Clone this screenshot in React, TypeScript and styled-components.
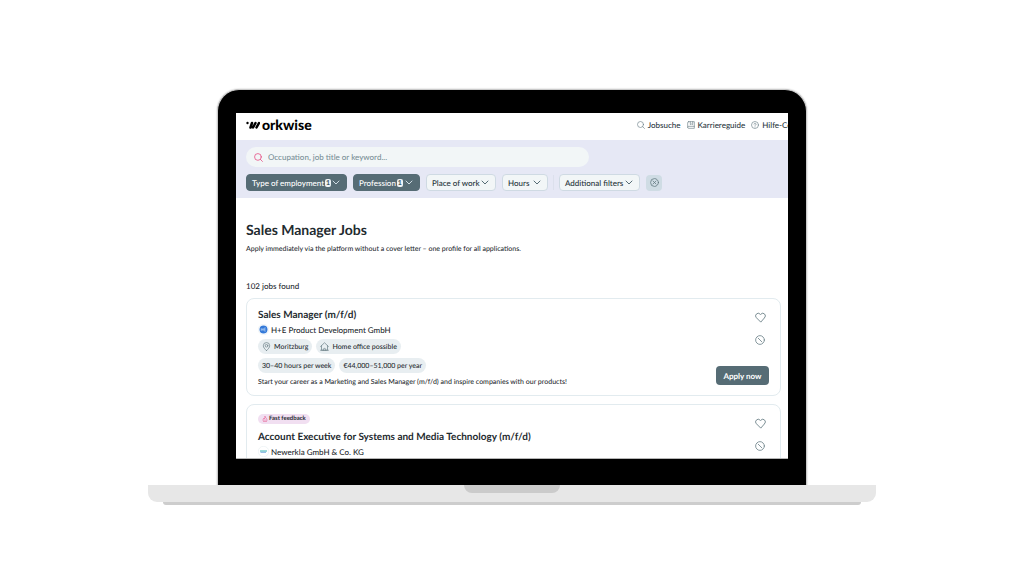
import React from "react";
import styled, { createGlobalStyle, css } from "styled-components";

const Global = createGlobalStyle`
  *, *::before, *::after { box-sizing: border-box; }
  body {
    margin: 0;
    background: #fff;
    color: #1f2b30;
    font-family: Lato, "Liberation Sans", sans-serif;
    font-size: 8px;
    line-height: 10px;
    font-weight: 500;
    text-rendering: geometricPrecision;
  }
  button, input { font: inherit; color: inherit; margin: 0; text-rendering: inherit; }
  h1, h2, p, ul { margin: 0; padding: 0; }
  a { color: inherit; text-decoration: none; }
`;

const Stage = styled.div`
  padding: 89px 148px 0;
`;

const Lid = styled.div`
  margin: 0 69px;
  padding: 23px 18px 26px;
  background: #000;
  border: 1px solid #c9c9c9;
  border-bottom: 0;
  border-radius: 22px 22px 0 0;
  box-shadow: 0 0 1px 1px #ececec;
`;

const Screen = styled.div`
  aspect-ratio: 552 / 346;
  overflow: hidden;
  background: #fff;
  border-bottom: 1px solid #b5b5b5;
`;

const Base = styled.div`
  height: 17px;
  background: #e7e7e7;
  border-radius: 0 0 9px 9px;
  display: flex;
  justify-content: center;
`;

const Notch = styled.div`
  width: 96px;
  height: 8px;
  background: #cbcbcb;
  border-radius: 0 0 9px 9px;
`;

const Foot = styled.div`
  margin: 0 15px;
  height: 3px;
  background: #cdcdcd;
  border-radius: 0 0 3px 3px;
`;

const Header = styled.header`
  display: flex;
  align-items: center;
  justify-content: space-between;
  height: 27px;
  padding: 0 0 3px 10px;
`;

const Logo = styled.a`
  display: flex;
  align-items: center;
  gap: 2px;
  color: #000;
  font-size: 14px;
  line-height: 16px;
  font-weight: 900;
`;

const Nav = styled.nav`
  display: flex;
  flex: none;
  gap: 6px;
  margin-right: -18px;
`;

const NavLink = styled.a`
  display: flex;
  align-items: center;
  gap: 3px;
  color: #2b393f;
  white-space: nowrap;
  svg { color: #70848b; }
`;

const SearchBand = styled.form`
  height: 58px;
  padding: 7px 10px;
  background: #e6e8f5;
`;

const SearchBox = styled.label`
  display: flex;
  align-items: center;
  gap: 5px;
  width: 343px;
  max-width: 100%;
  height: 20px;
  padding: 0 8px;
  border-radius: 10px;
  background: #f2f6f7;
  color: #e5447e;
`;

const SearchInput = styled.input`
  flex: 1;
  min-width: 0;
  padding: 0;
  border: 0;
  outline: 0;
  background: transparent;
  color: #37474d;
  &::placeholder { color: #7b9098; opacity: 1; }
`;

const Filters = styled.div`
  display: flex;
  align-items: center;
  gap: 6px;
  margin-top: 7px;
`;

const FilterButton = styled.button<{ $active?: boolean; $width: number }>`
  display: flex;
  align-items: center;
  justify-content: space-between;
  width: ${(p) => p.$width}px;
  height: 17px;
  padding: 0 6px 0 5px;
  border: 1px solid #cfdae3;
  border-radius: 4px;
  background: #f2f6f7;
  color: #26343a;
  white-space: nowrap;
  svg { color: #566c75; }
  ${(p) =>
    p.$active &&
    css`
      border-color: #566c75;
      background: #566c75;
      color: #fff;
      svg { color: #cfdce4; }
    `}
`;

const FilterText = styled.span`
  display: flex;
  align-items: center;
  gap: 1px;
`;

const Count = styled.span`
  width: 6px;
  height: 8px;
  border-radius: 2px;
  background: #eef3f5;
  color: #42565e;
  font-size: 7px;
  line-height: 8px;
  font-weight: 700;
  text-align: center;
`;

const Divider = styled.span`
  width: 1px;
  height: 15px;
  margin: 0 -1px;
  background: #dce0ec;
`;

const ResetButton = styled.button`
  display: grid;
  place-items: center;
  width: 16px;
  height: 16px;
  padding: 0;
  border: 0;
  border-radius: 4px;
  background: #cfdce4;
  color: #5f757e;
`;

const Content = styled.main`
  padding: 23px 7px 0 10px;
`;

const Title = styled.h1`
  font-size: 14px;
  line-height: 18px;
  font-weight: 700;
`;

const Lead = styled.p`
  margin-top: 5px;
  font-size: 7px;
`;

const Found = styled.p`
  margin-top: 27px;
`;

const Cards = styled.div`
  display: grid;
  gap: 8px;
  margin-top: 7px;
`;

const Card = styled.article`
  display: flex;
  justify-content: space-between;
  height: 98px;
  padding: 9px 11px 8px;
  border: 1px solid #e2ebef;
  border-radius: 8px;
`;

const Details = styled.div`
  display: flex;
  flex-direction: column;
  align-items: flex-start;
`;

const JobTitle = styled.h2`
  font-size: 10px;
  line-height: 14px;
  font-weight: 700;
`;

const Company = styled.p`
  display: flex;
  align-items: center;
  gap: 2px;
  height: 15px;
`;

const Tags = styled.ul`
  display: flex;
  gap: 4px;
  margin: 2px 0;
  list-style: none;
`;

const Tag = styled.li`
  display: flex;
  align-items: center;
  gap: 3px;
  height: 15px;
  padding: 0 4px;
  border-radius: 8px;
  background: #e8eef1;
  font-size: 7px;
  svg { color: #70848b; }
`;

const Summary = styled.p`
  margin-top: 2px;
  font-size: 7px;
`;

const FastBadge = styled.span`
  display: flex;
  align-items: center;
  gap: 1px;
  height: 10px;
  margin-bottom: 6px;
  padding: 0 4px;
  border-radius: 5px;
  background: #f1dff1;
  font-size: 6px;
  font-weight: 700;
  svg { color: #e5447e; }
`;

const Actions = styled.div`
  display: flex;
  flex-direction: column;
  align-items: flex-end;
  gap: 11px;
  padding-top: 3px;
`;

const IconButton = styled.button`
  display: grid;
  place-items: center;
  width: 12px;
  height: 12px;
  margin-right: 3px;
  padding: 0;
  border: 0;
  background: transparent;
  color: #70848b;
`;

const ApplyButton = styled.button`
  width: 53px;
  height: 19px;
  margin-top: 9px;
  padding: 0;
  border: 0;
  border-radius: 4px;
  background: #566c75;
  color: #fff;
  font-weight: 700;
`;

type IconProps = { size?: number; children: React.ReactNode };

const Icon = ({ size = 8, children }: IconProps) => (
  <svg width={size} height={size} viewBox="0 0 24 24" fill="none" stroke="currentColor" strokeWidth="2" strokeLinecap="round" strokeLinejoin="round" aria-hidden="true">
    {children}
  </svg>
);

const SearchIcon = ({ size }: { size?: number }) => (
  <Icon size={size}>
    <circle cx="10.5" cy="10.5" r="9" />
    <path d="M17 17l5.5 5.5" />
  </Icon>
);

const GuideIcon = () => (
  <Icon>
    <path d="M5 2h17v20H5a3 3 0 0 1-3-3V5a3 3 0 0 1 3-3zM2 19a3 3 0 0 1 3-3h17M10 2v9l3-2 4 2V2" />
  </Icon>
);

const HelpIcon = () => (
  <Icon>
    <circle cx="12" cy="12" r="10.5" />
    <path d="M9 9.5a3 3 0 1 1 4.500 2.600c-1 .6-1.500 1.100-1.500 2.400M12 18v.2" />
  </Icon>
);

const Chevron = () => (
  <svg width="8" height="5" viewBox="0 0 16 10" fill="none" stroke="currentColor" strokeWidth="2" strokeLinecap="round" strokeLinejoin="round" aria-hidden="true">
    <path d="M2 2l6 6 6-6" />
  </svg>
);

const CloseIcon = () => (
  <Icon size={9}>
    <circle cx="12" cy="12" r="10.5" />
    <path d="M8 8l8 8M16 8l-8 8" />
  </Icon>
);

const PinIcon = () => (
  <Icon size={9}>
    <path d="M12 23c-5-5-8.500-8.500-8.500-13a8.500 8.500 0 0 1 17 0c0 4.500-3.500 8-8.500 13z" />
    <circle cx="12" cy="10" r="3.500" />
  </Icon>
);

const HomeIcon = () => (
  <Icon size={9}>
    <path d="M1.500 12L12 2l10.500 10M4 10v12h16V10M9 22v-2a3 3 0 0 1 6 0v2M1.500 22h21" />
  </Icon>
);

const HeartIcon = () => (
  <Icon size={11}>
    <path d="M12 21.500L3 12.500a5.600 5.600 0 0 1 0-8 5.600 5.600 0 0 1 8 0l1 1 1-1a5.600 5.600 0 0 1 8 0 5.600 5.600 0 0 1 0 8z" />
  </Icon>
);

const HideIcon = () => (
  <Icon size={10}>
    <circle cx="12" cy="12" r="10.500" />
    <path d="M7.500 7.500l9 9" />
  </Icon>
);

const FlameIcon = () => (
  <Icon size={6}>
    <path d="M12 2c1 5 8 8 8 14a7 7 0 0 1-16 0c0-3 1.500-5 3-7l2 3c2-3 3-6 3-10zM12 15v6" />
  </Icon>
);

const LogoMark = () => (
  <svg width="14" height="8" viewBox="0 0 28 16" aria-hidden="true">
    <circle cx="3" cy="4" r="2.400" />
    <path d="M12 4l-3 9M19 4l-5 9M26 4l-5 9" fill="none" stroke="#000" strokeWidth="5" strokeLinecap="round" />
  </svg>
);

const ProductLogo = () => (
  <svg width="11" height="11" viewBox="0 0 22 22" aria-hidden="true">
    <circle cx="11" cy="11" r="10.500" fill="#fff" stroke="#e2ebef" />
    <circle cx="11" cy="11" r="8" fill="#3479d8" />
    <path d="M6.500 8v6M10 8v6M6.500 11h5M16 8h-3.500v6H16M12.500 11H15" fill="none" stroke="#b9d3f6" strokeWidth="1.200" />
  </svg>
);

const NewerklaLogo = () => (
  <svg width="11" height="11" viewBox="0 0 22 22" aria-hidden="true">
    <circle cx="11" cy="11" r="10.500" fill="#fff" stroke="#e2ebef" />
    <path d="M4 10h14" stroke="#35b3b0" strokeWidth="2" />
    <path d="M5 12.500h11" stroke="#77a9dc" strokeWidth="2" />
  </svg>
);

const SideActions = ({ apply }: { apply?: boolean }) => (
  <Actions>
    <IconButton type="button" aria-label="Save job"><HeartIcon /></IconButton>
    <IconButton type="button" aria-label="Hide job"><HideIcon /></IconButton>
    {apply && <ApplyButton type="button">Apply now</ApplyButton>}
  </Actions>
);

export default function App() {
  return (
    <>
      <Global />
      <Stage>
        <Lid>
          <Screen>
            <Header>
              <Logo href="#" aria-label="workwise"><LogoMark />orkwise</Logo>
              <Nav>
                <NavLink href="#"><SearchIcon />Jobsuche</NavLink>
                <NavLink href="#"><GuideIcon />Karriereguide</NavLink>
                <NavLink href="#"><HelpIcon />Hilfe-Center</NavLink>
              </Nav>
            </Header>
            <SearchBand>
              <SearchBox>
                <SearchIcon size={9} />
                <SearchInput aria-label="Search jobs" placeholder="Occupation, job title or keyword..." />
              </SearchBox>
              <Filters>
                <FilterButton type="button" $active $width={101}>
                  <FilterText>Type of employment <Count>1</Count></FilterText><Chevron />
                </FilterButton>
                <FilterButton type="button" $active $width={67}>
                  <FilterText>Profession <Count>1</Count></FilterText><Chevron />
                </FilterButton>
                <FilterButton type="button" $width={70}>Place of work<Chevron /></FilterButton>
                <FilterButton type="button" $width={46}>Hours<Chevron /></FilterButton>
                <Divider />
                <FilterButton type="button" $width={81}>Additional filters<Chevron /></FilterButton>
                <ResetButton type="button" aria-label="Reset filters"><CloseIcon /></ResetButton>
              </Filters>
            </SearchBand>
            <Content>
              <Title>Sales Manager Jobs</Title>
              <Lead>Apply immediately via the platform without a cover letter – one profile for all applications.</Lead>
              <Found>102 jobs found</Found>
              <Cards>
                <Card>
                  <Details>
                    <JobTitle>Sales Manager (m/f/d)</JobTitle>
                    <Company><ProductLogo />H+E Product Development GmbH</Company>
                    <Tags>
                      <Tag><PinIcon />Moritzburg</Tag>
                      <Tag><HomeIcon />Home office possible</Tag>
                    </Tags>
                    <Tags>
                      <Tag>30–40 hours per week</Tag>
                      <Tag>€44,000–51,000 per year</Tag>
                    </Tags>
                    <Summary>Start your career as a Marketing and Sales Manager (m/f/d) and inspire companies with our products!</Summary>
                  </Details>
                  <SideActions apply />
                </Card>
                <Card>
                  <Details>
                    <FastBadge><FlameIcon />Fast feedback</FastBadge>
                    <JobTitle>Account Executive for Systems and Media Technology (m/f/d)</JobTitle>
                    <Company><NewerklaLogo />Newerkla GmbH &amp; Co. KG</Company>
                  </Details>
                  <SideActions />
                </Card>
              </Cards>
            </Content>
          </Screen>
        </Lid>
        <Base><Notch /></Base>
        <Foot />
      </Stage>
    </>
  );
}
